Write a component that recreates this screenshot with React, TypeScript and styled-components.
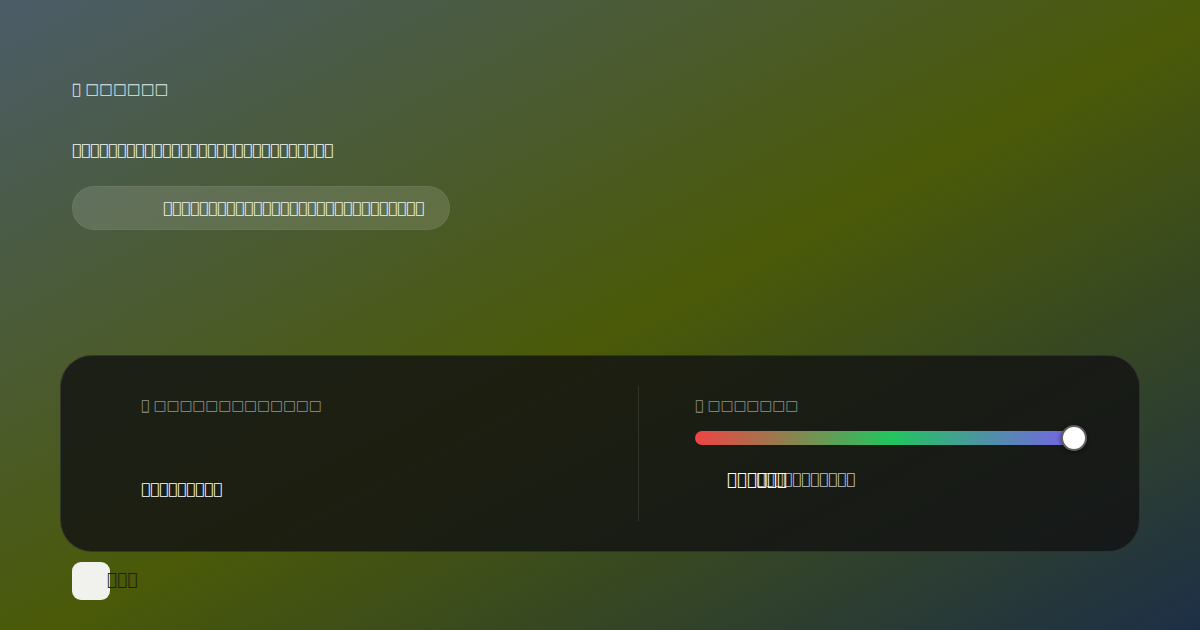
import React from "react";
import styled, { createGlobalStyle } from "styled-components";

const Global = createGlobalStyle`
  html, body { margin: 0; padding: 0; }
  body {
    font-family: "DejaVu Sans", sans-serif;
    background: #2a3a30;
  }
  * { box-sizing: border-box; }
`;

// Private-use code points: the installed faces draw each one as an empty box.
const privateText = (length: number, offset = 0) =>
  Array.from({ length }, (_, i) => String.fromCharCode(0xe000 + offset + i)).join("");

// A leading mark, a space, then a row of white squares.
const squareHeading = (squares: number, offset: number) =>
  `${privateText(1, offset)} ${"\u25A1".repeat(squares)}`;

const Page = styled.div`
  width: 1200px;
  height: 630px;
  display: flex;
  flex-direction: column;
  padding: 78px 60px 30px;
  background: linear-gradient(to bottom right, #4b5c69 0%, #4a5a08 52%, #1d2f46 100%);
  overflow: hidden;
`;

const Header = styled.header`
  display: flex;
  flex-direction: column;
  align-items: flex-start;
  padding: 0 12px;
`;

const Title = styled.h1`
  margin: 0;
  font-size: 14.7px;
  line-height: 22px;
  font-weight: 400;
  color: #dfe7ec;
`;

const Subtitle = styled.p`
  margin: 38px 0 0;
  font-size: 15px;
  line-height: 24px;
  color: #f7fafa;
`;

const CopyPill = styled.button`
  margin-top: 24px;
  width: 378px;
  height: 44px;
  border-radius: 22px;
  border: 1px solid rgba(255, 255, 255, 0.05);
  background: rgba(255, 255, 255, 0.13);
  color: #eef2ee;
  font-family: "DejaVu Sans", sans-serif;
  font-size: 15px;
  text-align: left;
  padding: 0 0 0 90px;
  cursor: pointer;
`;

const Panel = styled.section`
  margin-top: auto;
  height: 197px;
  display: grid;
  grid-template-columns: 1fr 1px 392px;
  column-gap: 56px;
  padding: 30px 52px 30px 80px;
  border-radius: 32px;
  border: 1px solid rgba(255, 255, 255, 0.1);
  background: rgba(18, 18, 18, 0.82);
`;

const Column = styled.div`
  display: flex;
  flex-direction: column;
  align-items: flex-start;
`;

const Divider = styled.div`
  background: rgba(255, 255, 255, 0.1);
`;

const Label = styled.div`
  margin-top: 8px;
  font-size: 13.7px;
  line-height: 22px;
  color: rgba(255, 255, 255, 0.52);
`;

const Value = styled.div`
  margin-top: 62px;
  font-size: 15px;
  line-height: 22px;
  color: #ffffff;
`;

const Track = styled.div`
  position: relative;
  margin-top: 15px;
  width: 100%;
  height: 14px;
  border-radius: 7px;
  background: linear-gradient(to right, #ef4444 0%, #22c55e 50%, #7c5cf0 100%);
`;

const Thumb = styled.div`
  position: absolute;
  right: 0;
  top: 50%;
  width: 26px;
  height: 26px;
  margin-top: -13px;
  border-radius: 50%;
  background: #ffffff;
  border: 2px solid #5e5e5e;
  box-shadow: 0 1px 4px rgba(0, 0, 0, 0.5);
`;

const Readout = styled.div`
  margin-top: 23px;
  display: flex;
  align-items: center;
  padding-left: 32px;
  line-height: 22px;
`;

const ReadoutValue = styled.span`
  font-size: 16.7px;
  color: #ffffff;
`;

const ReadoutHint = styled.span`
  margin-left: -31px;
  font-size: 15px;
  color: rgba(255, 255, 255, 0.75);
`;

const ToggleRow = styled.div`
  margin-top: 10px;
  padding-left: 12px;
  display: flex;
  align-items: center;
`;

const ToggleBox = styled.button`
  width: 38px;
  height: 38px;
  border-radius: 9px;
  border: none;
  background: #f1f1ee;
  padding: 0;
`;

const ToggleText = styled.span`
  margin-left: -3px;
  margin-bottom: 4px;
  font-size: 17px;
  line-height: 20px;
  color: #1d1d1a;
`;

export default function App() {
  return (
    <>
      <Global />
      <Page>
        <Header>
          <Title>{squareHeading(6, 0)}</Title>
          <Subtitle>{privateText(29, 16)}</Subtitle>
          <CopyPill>{privateText(29, 64)}</CopyPill>
        </Header>
        <Panel>
          <Column>
            <Label>{squareHeading(13, 112)}</Label>
            <Value>{privateText(9, 144)}</Value>
          </Column>
          <Divider />
          <Column>
            <Label>{squareHeading(7, 160)}</Label>
            <Track>
              <Thumb />
            </Track>
            <Readout>
              <ReadoutValue>{privateText(6, 176)}</ReadoutValue>
              <ReadoutHint>{privateText(11, 192)}</ReadoutHint>
            </Readout>
          </Column>
        </Panel>
        <ToggleRow>
          <ToggleBox aria-label="toggle" />
          <ToggleText>{privateText(3, 208)}</ToggleText>
        </ToggleRow>
      </Page>
    </>
  );
}
